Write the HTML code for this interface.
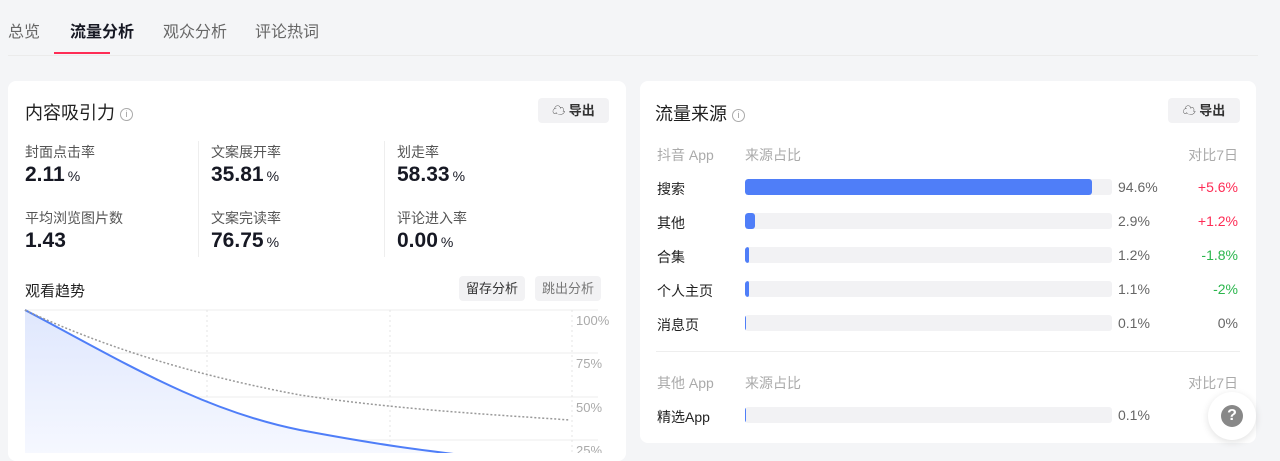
<!DOCTYPE html><html><head><meta charset="utf-8"><style>
*{margin:0;padding:0;box-sizing:border-box}
body{width:1280px;height:453px;overflow:hidden;background:#f4f5f7;font-family:"Liberation Sans","Noto Sans CJK SC",sans-serif;color:#1f1f1f;position:relative}
.a{position:absolute;white-space:nowrap}
.tab{top:18px;font-size:16px;color:#666}
.card{position:absolute;background:#fff;border-radius:8px}
.lbl{font-size:14px;color:#555}
.num{font-size:21px;font-weight:bold;color:#161823}
.num small{font-size:14px;font-weight:normal;margin-left:3px}
.btn{position:absolute;background:#f2f2f4;border-radius:4px;font-size:13px;color:#333;text-align:center;font-weight:bold}
.row{font-size:14px;color:#222}
.bar{position:absolute;left:745px;width:367px;height:16px;background:#f2f2f4;border-radius:3px;overflow:hidden}
.bar i{display:block;height:100%;background:#4f7ef8;border-radius:3px}
.pc{left:1118px;font-size:14px;color:#666}
.ch{right:42px;font-size:14px}
.hd{font-size:14px;color:#aaa}
</style></head><body>
<div class="a tab" style="left:8px">总览</div>
<div class="a tab" style="left:70px;color:#161823;font-weight:bold">流量分析</div>
<div class="a" style="left:54px;top:52px;width:56px;height:2px;background:#fe2c55"></div>
<div class="a tab" style="left:163px">观众分析</div>
<div class="a tab" style="left:255px">评论热词</div>
<div class="a" style="left:8px;top:55px;width:1250px;height:1px;background:#ebebeb"></div>

<div class="card" style="left:8px;top:81px;width:618px;height:380px"></div>
<div class="a" style="left:25px;top:99px;font-size:18px">内容吸引力 <span style="display:inline-block;width:13px;height:13px;border:1px solid #aaa;border-radius:50%;font-size:9px;color:#999;text-align:center;line-height:11px;vertical-align:2px">i</span></div>
<div class="btn" style="left:538px;top:98px;width:71px;height:25px;line-height:25px">☁ 导出</div>
<div class="a" style="left:198px;top:141px;width:1px;height:116px;background:#eee"></div>
<div class="a" style="left:384px;top:141px;width:1px;height:116px;background:#eee"></div>
<div class="a lbl" style="left:25px;top:142px">封面点击率</div>
<div class="a num" style="left:25px;top:163px">2.11<small>%</small></div>
<div class="a lbl" style="left:211px;top:142px">文案展开率</div>
<div class="a num" style="left:211px;top:163px">35.81<small>%</small></div>
<div class="a lbl" style="left:397px;top:142px">划走率</div>
<div class="a num" style="left:397px;top:163px">58.33<small>%</small></div>
<div class="a lbl" style="left:25px;top:208px">平均浏览图片数</div>
<div class="a num" style="left:25px;top:229px">1.43</div>
<div class="a lbl" style="left:211px;top:208px">文案完读率</div>
<div class="a num" style="left:211px;top:229px">76.75<small>%</small></div>
<div class="a lbl" style="left:397px;top:208px">评论进入率</div>
<div class="a num" style="left:397px;top:229px">0.00<small>%</small></div>
<div class="a" style="left:25px;top:280px;font-size:15px">观看趋势</div>
<div class="btn" style="left:459px;top:276px;width:66px;height:25px;line-height:25px;font-weight:normal">留存分析</div>
<div class="btn" style="left:535px;top:276px;width:66px;height:25px;line-height:25px;color:#777;font-weight:normal">跳出分析</div>
<svg class="a" style="left:0;top:300px" width="626" height="153">
<defs><linearGradient id="g" x1="0" y1="0" x2="0" y2="1"><stop offset="0" stop-color="#dfe7fd"/><stop offset="1" stop-color="#f6f8ff"/></linearGradient></defs>
<g stroke="#eee"><line x1="25" y1="10" x2="598" y2="10"/><line x1="25" y1="53" x2="598" y2="53"/><line x1="25" y1="97" x2="598" y2="97"/><line x1="25" y1="140" x2="598" y2="140"/></g>
<g stroke="#e4e4e4" stroke-dasharray="2,3"><line x1="207" y1="10" x2="207" y2="153"/><line x1="390" y1="10" x2="390" y2="153"/><line x1="572" y1="10" x2="572" y2="153"/></g>
<path d="M25 10 C120 60 200 110 300 130 C380 145 420 150 470 156 L25 156Z" fill="url(#g)"/>
<path d="M25 10 C120 60 200 110 300 130 C380 145 420 150 470 156" fill="none" stroke="#4f7ef8" stroke-width="2"/>
<path d="M25 10 C120 55 220 80 300 95 C400 110 500 115 570 120" fill="none" stroke="#999" stroke-width="1.5" stroke-dasharray="2,2"/>
<g fill="#aaa" font-size="13" font-family="Liberation Sans"><text x="576" y="25">100%</text><text x="576" y="68">75%</text><text x="576" y="112">50%</text><text x="576" y="155">25%</text></g>
</svg>

<div class="card" style="left:640px;top:81px;width:616px;height:362px"></div>
<div class="a" style="left:655px;top:100px;font-size:18px">流量来源 <span style="display:inline-block;width:13px;height:13px;border:1px solid #aaa;border-radius:50%;font-size:9px;color:#999;text-align:center;line-height:11px;vertical-align:2px">i</span></div>
<div class="btn" style="left:1168px;top:98px;width:72px;height:25px;line-height:25px">☁ 导出</div>
<div class="a hd" style="left:657px;top:145px">抖音 App</div><div class="a hd" style="left:745px;top:145px">来源占比</div><div class="a hd" style="right:42px;top:145px">对比7日</div>
<div class="a row" style="left:657px;top:179px">搜索</div><div class="bar" style="top:179px"><i style="width:94.6%"></i></div><div class="a pc" style="top:179px">94.6%</div><div class="a ch" style="top:179px;color:#fe2c55">+5.6%</div>
<div class="a row" style="left:657px;top:213px">其他</div><div class="bar" style="top:213px"><i style="width:10px"></i></div><div class="a pc" style="top:213px">2.9%</div><div class="a ch" style="top:213px;color:#fe2c55">+1.2%</div>
<div class="a row" style="left:657px;top:247px">合集</div><div class="bar" style="top:247px"><i style="width:4px"></i></div><div class="a pc" style="top:247px">1.2%</div><div class="a ch" style="top:247px;color:#2bb64d">-1.8%</div>
<div class="a row" style="left:657px;top:281px">个人主页</div><div class="bar" style="top:281px"><i style="width:4px"></i></div><div class="a pc" style="top:281px">1.1%</div><div class="a ch" style="top:281px;color:#2bb64d">-2%</div>
<div class="a row" style="left:657px;top:315px">消息页</div><div class="bar" style="top:315px"><i style="width:1px"></i></div><div class="a pc" style="top:315px">0.1%</div><div class="a ch" style="top:315px;color:#666">0%</div>
<div class="a" style="left:656px;top:351px;width:584px;height:1px;background:#eee"></div>
<div class="a hd" style="left:657px;top:373px">其他 App</div><div class="a hd" style="left:745px;top:373px">来源占比</div><div class="a hd" style="right:42px;top:373px">对比7日</div>
<div class="a row" style="left:657px;top:407px">精选App</div><div class="bar" style="top:407px"><i style="width:1px"></i></div><div class="a pc" style="top:407px">0.1%</div><div class="a ch" style="top:407px;color:#fe2c55">+0%</div>
<div class="a" style="left:1208px;top:392px;width:48px;height:48px;border-radius:50%;background:#fff;box-shadow:0 2px 8px rgba(0,0,0,.12)"></div>
<div class="a" style="left:1221px;top:405px;width:22px;height:22px;border-radius:50%;background:#888;color:#fff;font-weight:bold;font-size:16px;text-align:center;line-height:22px">?</div>
</body></html>
